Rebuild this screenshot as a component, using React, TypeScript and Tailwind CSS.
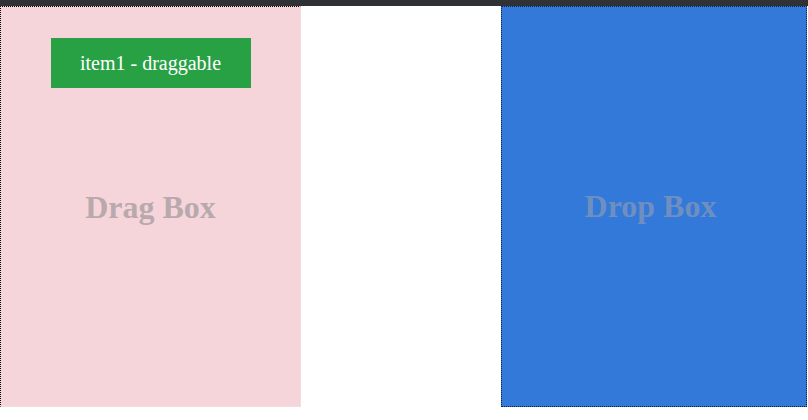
import React from 'react';

export default function App() {
  return (
    <div className="w-[808px] h-[420px] bg-white overflow-hidden font-['Liberation_Serif','Times_New_Roman',serif]">
      <div className="h-[6px] bg-[#2f3134]" />
      <div className="flex justify-between pr-[1px]">
        {/* drag box */}
        <div className="w-[301px] h-[401px] bg-[#f5d5da] border border-dotted border-t-black border-l-black border-r-[#e8e8e8] border-b-[#e8e8e8] flex flex-col items-center">
          <div className="mt-[31px] w-[200px] h-[50px] bg-[#28a145] text-white text-[20px] font-['Liberation_Serif',serif] flex items-center justify-center">
            item1 - draggable
          </div>
          <div className="mt-[95px] text-[32px] font-bold text-[#b9a9ad] font-['Liberation_Serif',serif]">Drag Box</div>
        </div>
        {/* drop box */}
        <div className="w-[306px] h-[401px] bg-[#3379d9] border border-dotted border-[#10203a] flex items-center justify-center pr-[7px]">
          <div className="text-[32px] font-bold text-[#6f8fc0] pb-[1px] font-['Liberation_Serif',serif]">Drop Box</div>
        </div>
      </div>
    </div>
  );
}
